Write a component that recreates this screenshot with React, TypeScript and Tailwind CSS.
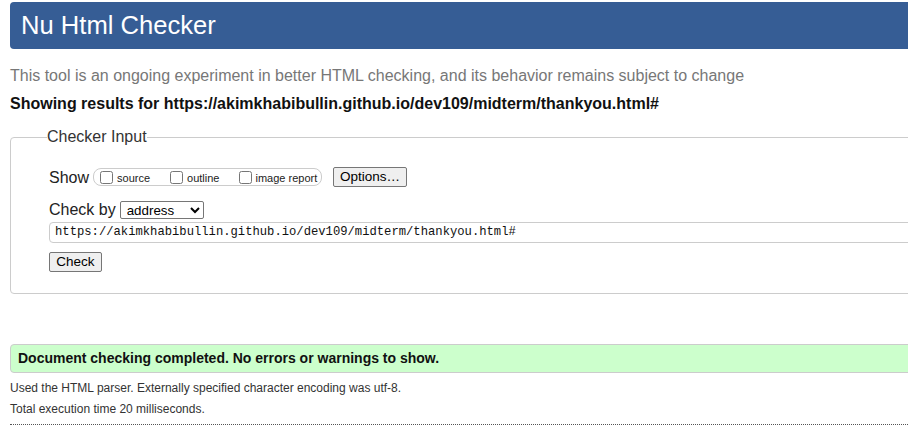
export default function App() {
  const url = 'https://akimkhabibullin.github.io/dev109/midterm/thankyou.html#';
  return (
    <div className="w-[908px] h-[439px] overflow-hidden bg-white text-[#222] font-['Liberation_Sans',Arial,sans-serif]">
      <div className="ml-[10px] w-[1000px] pt-[2px]">
        <h1 className="h-[47px] bg-[#365d95] rounded-l-[4px] pl-[11px] text-white text-[25.6px] leading-[47px]">
          Nu Html Checker
        </h1>
        <p className="mt-[18px] text-[16px] leading-[18px] text-[#777]">
          This tool is an ongoing experiment in better HTML checking, and its behavior remains subject to change
        </p>
        <p className="mt-[10px] text-[16px] leading-[18px] font-bold text-[#111]">Showing results for {url}</p>

        <fieldset className="mt-[15px] border border-[#ccc] rounded-[4px] pl-[38px] pb-[20px]">
          <legend className="-ml-[2px] text-[16px] leading-[18px] text-[#333]">Checker Input</legend>

          <div className="mt-[21px] flex items-center h-[20px]">
            <span className="text-[16px] leading-[18px] mr-[4px] mt-[1px]">Show</span>
            <div className="flex items-center h-[18px] w-[229px] border border-[#ccc] rounded-[8px] pl-[6px] text-[11px]">
              <label className="flex items-center">
                <input type="checkbox" className="m-0 w-[13px] h-[13px]" />
                <span className="ml-[4px] mt-[2px]">source</span>
              </label>
              <label className="flex items-center ml-[20px]">
                <input type="checkbox" className="m-0 w-[13px] h-[13px]" />
                <span className="ml-[4px] mt-[2px]">outline</span>
              </label>
              <label className="flex items-center ml-[20px]">
                <input type="checkbox" className="m-0 w-[13px] h-[13px]" />
                <span className="ml-[3px] mt-[2px]">image report</span>
              </label>
            </div>
            <button className="ml-[11px] h-[20px] w-[74px] bg-[#efefef] border border-[#767676] rounded-[2px] text-[13.5px] leading-[18px] text-black">
              Options…
            </button>
          </div>

          <div className="mt-[13px] flex items-center h-[20px]">
            <span className="text-[16px] leading-[18px] mr-[4px]">Check by</span>
            <select
              defaultValue="address"
              className="h-[18px] w-[84px] border border-[#767676] rounded-[2px] bg-white text-[13.33px] leading-[16px] text-black pl-[2px]"
            >
              <option value="address">address</option>
              <option value="file">file upload</option>
              <option value="textarea">text input</option>
            </select>
          </div>

          <div className="mt-[2px] h-[21px] border border-[#ccc] rounded-[4px] pl-[5px] flex items-center font-['Liberation_Mono',monospace] text-[12.2px] text-[#111]">
            {url}
          </div>

          <button className="mt-[9px] h-[20px] w-[53px] bg-[#efefef] border border-[#767676] rounded-[2px] text-[13.5px] leading-[18px] text-black">
            Check
          </button>
        </fieldset>

        <div className="mt-[50px] h-[29px] bg-[#ccffcc] border border-[#ccc] rounded-l-[4px] pl-[7px] flex items-center text-[14px] font-bold text-[#111]">
          Document checking completed. No errors or warnings to show.
        </div>
        <p className="mt-[8px] text-[12px] leading-[14px] text-[#333]">
          Used the HTML parser. Externally specified character encoding was utf-8.
        </p>
        <p className="mt-[7px] text-[12px] leading-[14px] text-[#333]">Total execution time 20 milliseconds.</p>
        <div className="mt-[8px] border-t border-dotted border-[#555]" />
      </div>
    </div>
  );
}
